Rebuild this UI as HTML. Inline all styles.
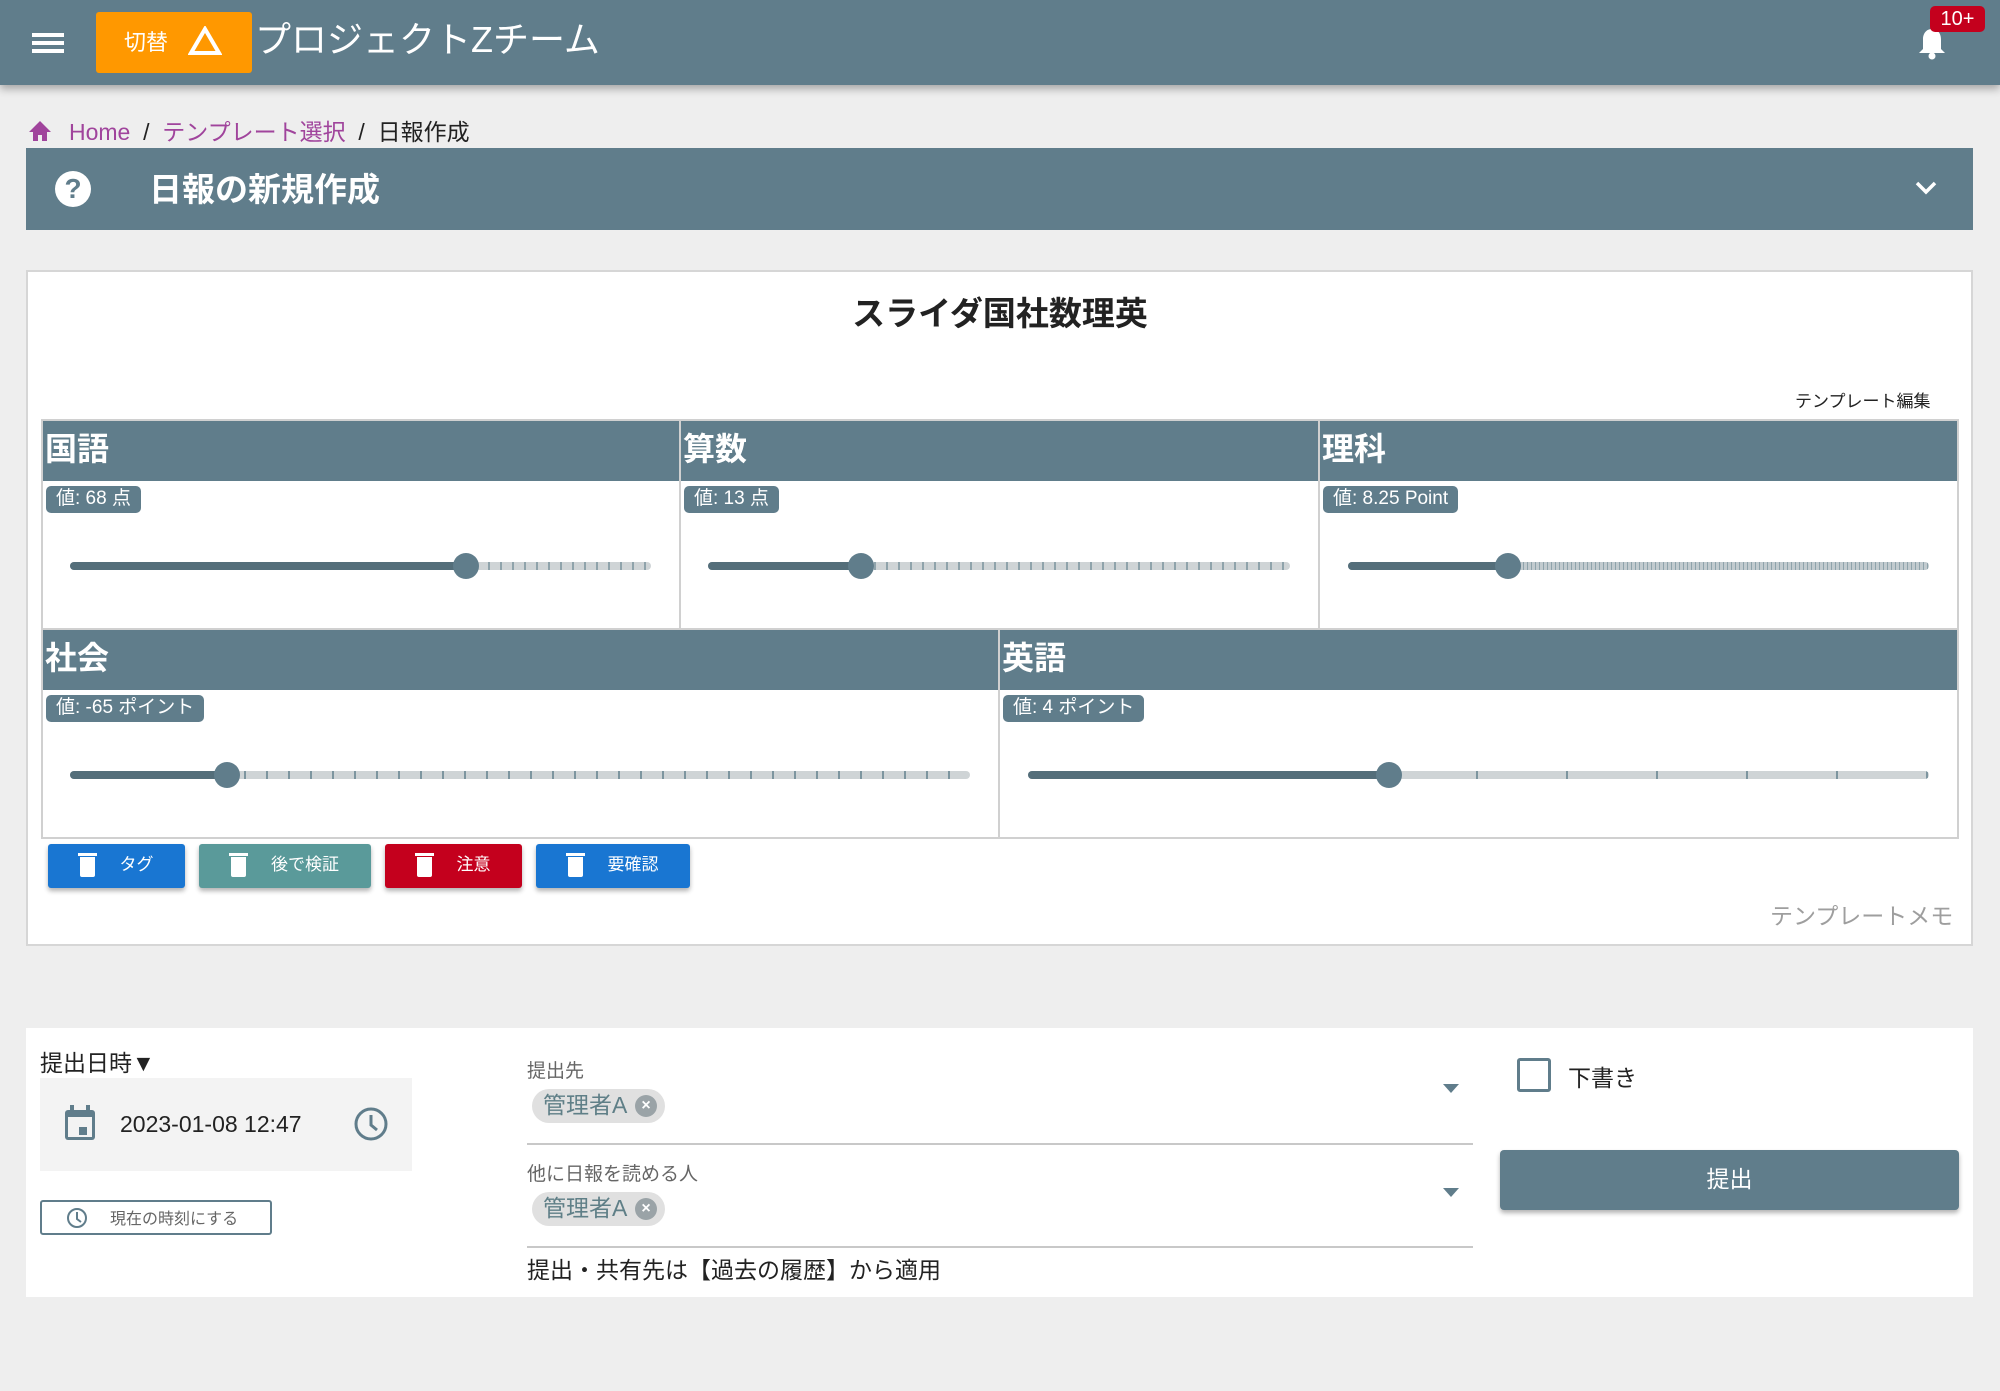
<!DOCTYPE html>
<html><head><meta charset="utf-8"><style>
*{box-sizing:border-box;margin:0;padding:0}
body{width:2000px;height:1391px;background:#eeeeee;font-family:"Liberation Sans","Noto Sans CJK JP",sans-serif;position:relative;overflow:hidden;color:#222}
.a{position:absolute}
.hdr{left:0;top:0;width:2000px;height:85px;background:#607d8b;box-shadow:0 4px 8px rgba(0,0,0,.3)}
.bar{background:#607d8b;color:#fff}
.cell{position:absolute;background:#fff;outline:2px solid #d0d0d0}
.cell .h{height:60px;background:#607d8b;color:#fff;font-weight:bold;font-size:32px;line-height:56px;padding-left:2px}
.chip{position:absolute;left:3px;top:65px;height:27px;background:#607d8b;color:#fff;font-size:19px;line-height:25px;padding:0 10px;border-radius:5px}
.trk{position:absolute;height:8px;border-radius:4px;background:#cfd4d6}
.fill{position:absolute;left:0;top:0;height:8px;border-radius:4px;background:#546e7a}
.th{position:absolute;width:26px;height:26px;border-radius:50%;background:#607d8b;top:-9px;margin-left:-13px}
.btn{position:absolute;top:844px;height:44px;border-radius:3px;color:#fff;font-size:17px;line-height:42px;box-shadow:0 3px 5px rgba(0,0,0,.3)}
.btn i{position:absolute;left:32px;top:13px;width:15px;height:20px;background:#fff;border-radius:0 0 2px 2px}
.btn i:before{content:"";position:absolute;left:-2px;top:-4px;width:19px;height:3px;background:#fff}
.btn span{position:absolute;right:0;left:0;text-align:center;padding-left:40px}
.lbl{font-size:19px;color:#666}
.tag{position:absolute;left:532px;height:34px;width:133px;border-radius:17px;background:#e0e0e0;color:#5f7f87;font-size:23px;line-height:32px;padding-left:11px}
.tag b{position:absolute;right:8px;top:6px;width:22px;height:22px;border-radius:50%;background:#9aa3a7;color:#fff;font-size:16px;line-height:22px;text-align:center;font-weight:bold}
.ul{position:absolute;left:527px;width:946px;height:2px;background:#c8c8c8}
.arr{position:absolute;left:1443px;width:0;height:0;border-left:8px solid transparent;border-right:8px solid transparent;border-top:9px solid #607d8b}
</style></head><body>
<div class="a hdr"></div>
<div class="a" style="left:32px;top:33px;width:32px;height:4px;background:#fff;box-shadow:0 8px 0 #fff,0 16px 0 #fff"></div>
<div class="a" style="left:96px;top:12px;width:156px;height:61px;background:#ff9800;border-radius:3px"></div>
<div class="a" style="left:124px;top:25px;color:#fff;font-size:22px">切替</div>
<svg class="a" style="left:188px;top:26px" width="34" height="30"><path d="M17 3 L31 27 H3 Z" fill="none" stroke="#fff" stroke-width="4"/></svg>
<div class="a" style="left:255px;top:11px;color:#fff;font-size:36px">プロジェクトZチーム</div>
<svg class="a" style="left:1917px;top:26px" width="30" height="36"><path d="M15 3c-6 0-9 5-9 10v10l-4 4h26l-4-4V13c0-5-3-10-9-10z" fill="#fff"/><circle cx="15" cy="30" r="3.5" fill="#fff"/></svg>
<div class="a" style="left:1930px;top:6px;width:55px;height:26px;background:#c4001d;border-radius:5px;color:#fff;font-size:20px;line-height:26px;text-align:center">10+</div>

<svg class="a" style="left:28px;top:120px" width="24" height="22"><path d="M12 1 L23 12 H19 V21 H14 V15 H10 V21 H5 V12 H1 Z" fill="#a0449c"/></svg>
<div class="a" style="left:69px;top:113px;font-size:23px;color:#a0449c">Home <span style="color:#222">&nbsp;/&nbsp;</span> テンプレート選択 <span style="color:#222">&nbsp;/&nbsp; 日報作成</span></div>

<div class="a bar" style="left:26px;top:148px;width:1947px;height:82px"></div>
<div class="a" style="left:55px;top:171px;width:36px;height:36px;border-radius:50%;background:#fff;color:#607d8b;font-weight:bold;font-size:28px;line-height:36px;text-align:center">?</div>
<div class="a" style="left:149px;top:163px;color:#fff;font-size:33px;font-weight:bold">日報の新規作成</div>
<svg class="a" style="left:1914px;top:180px" width="24" height="16"><path d="M3 3 L12 12 L21 3" fill="none" stroke="#fff" stroke-width="3.5"/></svg>

<div class="a" style="left:26px;top:270px;width:1947px;height:676px;background:#fff;border:2px solid #d6d6d6"></div>
<div class="a" style="left:0;width:2000px;top:287px;text-align:center;font-size:33px;font-weight:bold">スライダ国社数理英</div>
<div class="a" style="left:1795px;top:387px;font-size:17px">テンプレート編集</div>

<div class="cell" style="left:43px;top:421px;width:636px;height:207px"><div class="h">国語</div><div class="chip">値: 68 点</div>
<div class="trk" style="left:27px;top:141px;width:581px;background:repeating-linear-gradient(90deg,#cfd4d6 0 10px,#8fa3ab 10px 12px)"><div class="fill" style="width:396px"></div><div class="th" style="left:396px"></div></div></div>
<div class="cell" style="left:681px;top:421px;width:637px;height:207px"><div class="h">算数</div><div class="chip">値: 13 点</div>
<div class="trk" style="left:27px;top:141px;width:582px;background:repeating-linear-gradient(90deg,#cfd4d6 0 10px,#8fa3ab 10px 12px)"><div class="fill" style="width:153px"></div><div class="th" style="left:153px"></div></div></div>
<div class="cell" style="left:1320px;top:421px;width:637px;height:207px"><div class="h">理科</div><div class="chip">値: 8.25 Point</div>
<div class="trk" style="left:28px;top:141px;width:581px;background:repeating-linear-gradient(90deg,#c2cbcf 0 3px,#8fa3ab 3px 4px)"><div class="fill" style="width:160px"></div><div class="th" style="left:160px"></div></div></div>
<div class="cell" style="left:43px;top:630px;width:955px;height:207px"><div class="h">社会</div><div class="chip">値: -65 ポイント</div>
<div class="trk" style="left:27px;top:141px;width:900px;background:repeating-linear-gradient(90deg,#cfd4d6 0 20px,#7d959f 20px 22px)"><div class="fill" style="width:157px"></div><div class="th" style="left:157px"></div></div></div>
<div class="cell" style="left:1000px;top:630px;width:957px;height:207px"><div class="h">英語</div><div class="chip">値: 4 ポイント</div>
<div class="trk" style="left:28px;top:141px;width:901px;background:repeating-linear-gradient(90deg,#cfd4d6 0 88px,#7d959f 88px 90px)"><div class="fill" style="width:361px"></div><div class="th" style="left:361px"></div></div></div>

<div class="btn" style="left:48px;width:137px;background:#1976d2"><i></i><span>タグ</span></div>
<div class="btn" style="left:199px;width:172px;background:#5a9a9a"><i></i><span>後で検証</span></div>
<div class="btn" style="left:385px;width:137px;background:#c4001d"><i></i><span>注意</span></div>
<div class="btn" style="left:536px;width:154px;background:#1976d2"><i></i><span>要確認</span></div>
<div class="a" style="left:1770px;top:897px;font-size:23px;color:#9e9e9e">テンプレートメモ</div>

<div class="a" style="left:26px;top:1028px;width:1947px;height:269px;background:#fff"></div>
<div class="a" style="left:40px;top:1044px;font-size:23px">提出日時▼</div>
<div class="a" style="left:40px;top:1078px;width:372px;height:93px;background:#f3f3f3"></div>
<svg class="a" style="left:64px;top:1105px" width="32" height="36"><rect x="1" y="5" width="30" height="30" rx="3" fill="#607d8b"/><rect x="6" y="0" width="4" height="8" fill="#607d8b"/><rect x="22" y="0" width="4" height="8" fill="#607d8b"/><rect x="4" y="12" width="24" height="20" fill="#f3f3f3"/><rect x="15" y="22" width="8" height="8" fill="#607d8b"/></svg>
<div class="a" style="left:120px;top:1111px;font-size:23px">2023-01-08 12:47</div>
<svg class="a" style="left:353px;top:1106px" width="36" height="36"><circle cx="18" cy="18" r="15" fill="none" stroke="#607d8b" stroke-width="3"/><path d="M18 9 V19 L24 24" fill="none" stroke="#607d8b" stroke-width="3"/></svg>
<div class="a" style="left:40px;top:1200px;width:232px;height:35px;border:2px solid #607d8b;border-radius:3px"></div>
<svg class="a" style="left:66px;top:1207px" width="22" height="22"><circle cx="11" cy="11" r="9" fill="none" stroke="#607d8b" stroke-width="2"/><path d="M11 5 V12 L15 15" fill="none" stroke="#607d8b" stroke-width="2"/></svg>
<div class="a" style="left:110px;top:1205px;font-size:16px;color:#666">現在の時刻にする</div>

<div class="a lbl" style="left:527px;top:1056px">提出先</div>
<div class="tag" style="top:1089px">管理者A<b>×</b></div>
<div class="arr" style="top:1084px"></div>
<div class="ul" style="top:1143px"></div>
<div class="a lbl" style="left:527px;top:1159px">他に日報を読める人</div>
<div class="tag" style="top:1192px">管理者A<b>×</b></div>
<div class="arr" style="top:1188px"></div>
<div class="ul" style="top:1246px"></div>
<div class="a" style="left:527px;top:1251px;font-size:23px">提出・共有先は【過去の履歴】から適用</div>

<div class="a" style="left:1517px;top:1058px;width:34px;height:34px;border:3px solid #607d8b;border-radius:3px"></div>
<div class="a" style="left:1568px;top:1059px;font-size:23px">下書き</div>
<div class="a" style="left:1500px;top:1150px;width:459px;height:60px;background:#607d8b;border-radius:4px;box-shadow:0 3px 5px rgba(0,0,0,.3);color:#fff;font-size:23px;line-height:58px;text-align:center">提出</div>
</body></html>
